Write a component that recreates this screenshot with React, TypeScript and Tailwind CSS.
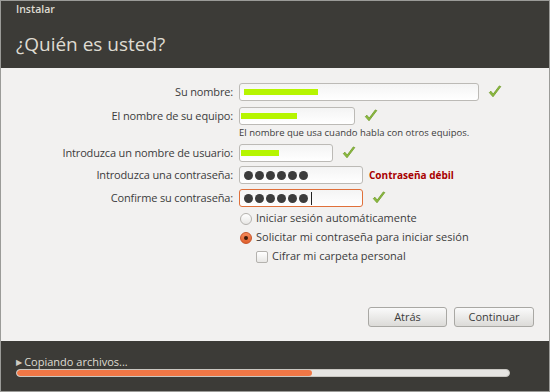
import React from "react";

const FONT = { fontFamily: '"Open Sans", "DejaVu Sans", sans-serif' };

function Check() {
  return (
    <svg width="16" height="16" viewBox="0 0 16 16" className="shrink-0">
      <path
        d="M2.3 8.6 L6 12.8 L13.8 2.6 L12.3 1.9 L6.2 10.1 L3.9 7.2 Z"
        fill="#8cbb3c"
        stroke="#6f9a2a"
        strokeWidth="0.8"
        strokeLinejoin="round"
      />
    </svg>
  );
}

function Field({
  width,
  focus,
  children,
}: {
  width: string;
  focus?: boolean;
  children?: React.ReactNode;
}) {
  return (
    <div
      className={`flex h-[18px] items-center rounded-[3px] border bg-gradient-to-b from-[#f4f4f4] to-[#ffffff] px-1 ${width} ${
        focus ? "border-[#e0703a]" : "border-[#bcbab6]"
      }`}
    >
      {children}
    </div>
  );
}

function Dots({ caret }: { caret?: boolean }) {
  return (
    <div className="flex items-center gap-[2px]">
      {Array.from({ length: 6 }).map((_, i) => (
        <span key={i} className="size-[9px] rounded-full bg-[#3c3c3c]" />
      ))}
      {caret && <span className="ml-[1px] h-[13px] w-px bg-[#222]" />}
    </div>
  );
}

function Scribble({ w, shift }: { w: string; shift?: boolean }) {
  return <span className={`block h-[6px] ${w} bg-[#b6f500] ${shift ? "-ml-[3px]" : ""}`} />;
}

function Row({
  label,
  children,
}: {
  label: string;
  children: React.ReactNode;
}) {
  return (
    <div className="flex h-[18px] items-center">
      <div className="w-[233px] shrink-0 pr-[1px] text-right tracking-[-0.15px]">{label}</div>
      <div className="flex items-center gap-[8px] pl-[5px]">{children}</div>
    </div>
  );
}

export default function App() {
  return (
    <div
      className="flex h-[392px] w-[550px] flex-col border border-[#9b9b98] bg-[#3c3b37] text-[11px] text-[#3c3c3c]"
      style={FONT}
    >
      {/* header */}
      <div className="h-[67px] shrink-0 px-[15px]">
        <div className="pt-[1px] text-[10.5px] font-semibold text-[#dfdbd2]">Instalar</div>
        <div className="pt-[13px] text-[19px] leading-[26px] text-[#dfdbd2]">¿Quién es usted?</div>
      </div>

      {/* content */}
      <div className="flex flex-1 flex-col bg-[#f2f1f0] pt-[15px]">
        <Row label="Su nombre:">
          <Field width="w-[240px]">
            <Scribble w="w-[74px]" />
          </Field>
          <Check />
        </Row>
        <div className="mt-[6px]">
          <Row label="El nombre de su equipo:">
            <Field width="w-[116px]">
              <Scribble w="w-[56px]" shift />
            </Field>
            <Check />
          </Row>
        </div>
        <div className="mt-[1px] pl-[238px] text-[9.5px] leading-[14px]">
          El nombre que usa cuando habla con otros equipos.
        </div>
        <div className="mt-[4px]">
          <Row label="Introduzca un nombre de usuario:">
            <Field width="w-[94px]">
              <Scribble w="w-[38px]" shift />
            </Field>
            <Check />
          </Row>
        </div>
        <div className="mt-[4px]">
          <Row label="Introduzca una contraseña:">
            <Field width="w-[124px]">
              <Dots />
            </Field>
            <span className="-ml-[2px] text-[10px] font-bold text-[#a80000]">Contraseña débil</span>
          </Row>
        </div>
        <div className="mt-[5px]">
          <Row label="Confirme su contraseña:">
            <Field width="w-[124px]" focus>
              <Dots caret />
            </Field>
            <Check />
          </Row>
        </div>

        <div className="mt-[4px] flex flex-col gap-[4px] pl-[239px]">
          <label className="flex h-[15px] items-center gap-[4px]">
            <span className="size-[12px] rounded-full border border-[#b4b2ae] bg-gradient-to-b from-[#ffffff] to-[#e8e7e5]" />
            Iniciar sesión automáticamente
          </label>
          <label className="flex h-[15px] items-center gap-[4px]">
            <span className="flex size-[12px] items-center justify-center rounded-full border border-[#c8542a] bg-gradient-to-b from-[#f58a5a] to-[#e0602c]">
              <span className="size-[4px] rounded-full bg-[#3c1a0a]" />
            </span>
            Solicitar mi contraseña para iniciar sesión
          </label>
          <label className="flex h-[15px] items-center gap-[4px] pl-[16px]">
            <span className="size-[12px] rounded-[2px] border border-[#b4b2ae] bg-gradient-to-b from-[#ffffff] to-[#e8e7e5]" />
            Cifrar mi carpeta personal
          </label>
        </div>

        <div className="mt-auto flex justify-end gap-[7px] pb-[14px] pr-[15px]">
          <button className="h-[20px] w-[79px] rounded-[3px] border border-[#a9a8a4] bg-gradient-to-b from-[#fafafa] to-[#dcdbd8] text-[11px] text-[#3c3c3c]">
            Atrás
          </button>
          <button className="h-[20px] w-[80px] rounded-[3px] border border-[#a9a8a4] bg-gradient-to-b from-[#fafafa] to-[#dcdbd8] text-[11px] text-[#3c3c3c]">
            Continuar
          </button>
        </div>
      </div>

      {/* footer */}
      <div className="h-[50px] shrink-0 px-[15px] pt-[14px]">
        <div className="flex items-center gap-[2px] text-[11px] leading-[14px] text-[#dfdbd2]">
          <span className="text-[8px] text-[#cfcbc2]">▶</span>
          Copiando archivos...
        </div>
        <div className="h-[8px] w-[494px] overflow-hidden rounded-full border border-[#c9c7c2] bg-[#e6e5e2]">
          <div className="h-full rounded-full bg-[#f07746]" style={{ width: "60%" }} />
        </div>
      </div>
    </div>
  );
}
